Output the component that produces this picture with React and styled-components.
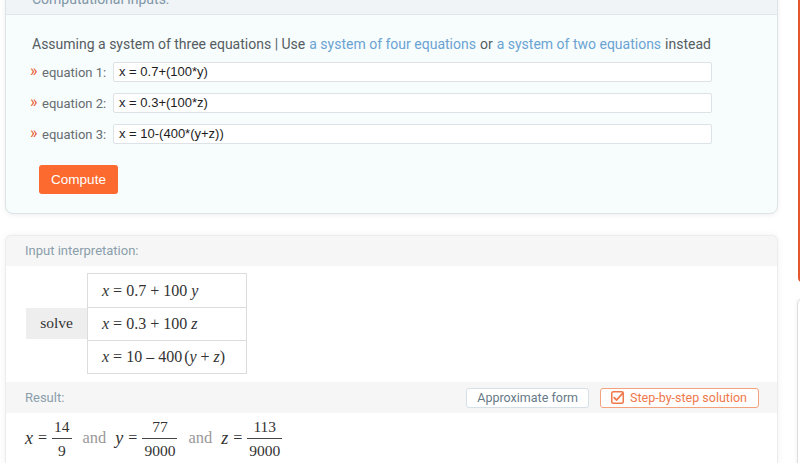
import React from "react";
import styled, { createGlobalStyle } from "styled-components";

const Global = createGlobalStyle`
  html, body { margin: 0; padding: 0; background: #ffffff; overflow: hidden; }
  body { font-family: Roboto, "Noto Sans", sans-serif; }
  * { box-sizing: border-box; }
`;

const Page = styled.div`
  display: flex;
  align-items: flex-start;
  padding-left: 5px;
  height: 463px;
  overflow: hidden;
`;

const Main = styled.main`
  display: flex;
  flex-direction: column;
  gap: 21px;
  width: 773px;
  flex-shrink: 0;
  margin-top: -17px;
`;

const Aside = styled.aside`
  display: flex;
  flex-direction: column;
  gap: 16px;
  width: 300px;
  flex-shrink: 0;
  margin-left: 20px;
`;

const AsideTop = styled.div`
  height: 282px;
  border-left: 2px solid #e4572e;
  border-bottom: 2px solid #e4572e;
  border-bottom-left-radius: 4px;
  background: #fff;
`;

const AsideBottom = styled.div`
  height: 200px;
  margin-left: -1px;
  border: 1px solid #dedede;
  border-radius: 6px 0 0 0;
  background: #fff;
  box-shadow: 0 0 5px rgba(0, 0, 0, 0.06);
`;

const InputCard = styled.section`
  border: 1px solid #dde4e8;
  border-radius: 0 0 8px 8px;
  background: #f7fcfd;
  box-shadow: 0 1px 5px rgba(0, 0, 0, 0.07);
  overflow: hidden;
`;

const CardHeader = styled.div`
  height: 31px;
  line-height: 30px;
  padding-left: 26px;
  background: #f1f4f6;
  border-bottom: 1px solid #e0e6ea;
  font-size: 14px;
  color: #7f96a7;
`;

const CardBody = styled.div`
  padding: 20px 65px 19px 25px;
`;

const Assume = styled.p`
  margin: 0;
  padding-left: 1px;
  font-size: 14px;
  line-height: 18px;
  color: #555d62;
  white-space: nowrap;
`;

const Link = styled.a`
  color: #6aa3d3;
  text-decoration: none;
  margin: 0 4px;
`;

const Rows = styled.div`
  display: flex;
  flex-direction: column;
  gap: 11px;
  margin-top: 9px;
`;

const Row = styled.div`
  display: flex;
  align-items: center;
  height: 20px;
`;

const Chevron = styled.span`
  color: #e8552b;
  font-size: 16px;
  width: 12px;
  line-height: 1;
  margin: -2px 0 0 -1px;
`;

const Label = styled.span`
  font-size: 13px;
  color: #666c70;
  width: 71px;
  flex-shrink: 0;
`;

const Field = styled.div`
  flex: 1;
  height: 20px;
  line-height: 18px;
  padding-left: 5px;
  border: 1px solid #dce2e5;
  border-radius: 2px;
  background: #fff;
  font-family: "Liberation Sans", Arial, sans-serif;
  font-size: 13px;
  color: #1d1d1d;
`;

const ComputeButton = styled.button`
  margin: 21px 0 0 8px;
  width: 79px;
  height: 29px;
  border: none;
  border-radius: 3px;
  background: #fd6a2f;
  color: #fff;
  font-family: "Liberation Sans", Arial, sans-serif;
  font-size: 13.5px;
  display: block;
`;

const PodCard = styled.section`
  border: 1px solid #ececec;
  border-radius: 6px 6px 0 0;
  background: #f6f6f6;
  box-shadow: 0 0 6px rgba(0, 0, 0, 0.06);
`;

const PodHeader = styled.div`
  height: 30px;
  line-height: 29px;
  padding-left: 19px;
  font-size: 13px;
  color: #8a9eab;
`;

const PodContent = styled.div`
  background: #fff;
  padding: ${(p) => p.$pad};
`;

const Table = styled.div`
  display: flex;
  align-items: center;
`;

const SolveCell = styled.div`
  width: 61px;
  height: 31px;
  line-height: 30px;
  text-align: center;
  background: #eeeeee;
  font-family: "Liberation Serif", "Times New Roman", serif;
  font-size: 15.5px;
  color: #333;
`;

const EqColumn = styled.div`
  display: flex;
  flex-direction: column;
  width: 160px;
  border: 1px solid #dcdcdc;
`;

const EqCell = styled.div`
  height: 33px;
  display: flex;
  align-items: center;
  padding-left: 14px;
  border-top: ${(p) => (p.$first ? "none" : "1px solid #dcdcdc")};
  font-family: "Liberation Serif", "Times New Roman", serif;
  font-size: 16px;
  color: #333;
  white-space: nowrap;
`;

const V = styled.i`
  font-style: italic;
  font-size: ${(p) => p.$size || "inherit"};
`;

const Op = styled.span`
  margin: 0 ${(p) => p.$gap ?? 4}px;
`;

const ResultBar = styled.div`
  height: 31px;
  display: flex;
  align-items: center;
  justify-content: space-between;
  padding: 0 18px 0 19px;
`;

const ResultLabel = styled.span`
  font-size: 13px;
  color: #8a9eab;
`;

const Buttons = styled.div`
  display: flex;
  gap: 11px;
`;

const PodButton = styled.button`
  height: 20px;
  display: flex;
  align-items: center;
  gap: 6px;
  padding: 0 ${(p) => (p.$accent ? "11px 0 10px" : "10px")};
  border: 1px solid ${(p) => (p.$accent ? "#f3a27d" : "#d5e0e7")};
  border-radius: 3px;
  background: #fff;
  color: ${(p) => (p.$accent ? "#f0784a" : "#667a87")};
  font-family: Roboto, sans-serif;
  font-size: 12.5px;
`;

const MathLine = styled.div`
  display: flex;
  align-items: center;
  height: 50px;
  padding-left: 19px;
  font-family: "Liberation Serif", "Times New Roman", serif;
  font-size: 16px;
  color: #333;
  white-space: nowrap;
`;

const Frac = styled.span`
  display: inline-flex;
  flex-direction: column;
  align-items: center;
  font-size: 15.5px;
  line-height: 14px;
  margin-top: 2px;
`;

const Num = styled.span`
  padding: 0 2px 4px;
`;

const Den = styled.span`
  padding: 5px 2px 0;
  border-top: 1px solid #444;
  align-self: stretch;
  text-align: center;
`;

const And = styled.span`
  color: #999;
  font-size: 16.5px;
  margin: 0 9px 0 11px;
`;

const CheckIcon = () => (
  <svg width="13" height="13" viewBox="0 0 13 13" fill="none">
    <rect x="0.75" y="0.75" width="11.5" height="11.5" rx="1.5" stroke="#f0784a" strokeWidth="1.5" />
    <path d="M3.2 6.6 L5.6 9 L11.8 2.2" stroke="#f0784a" strokeWidth="1.8" strokeLinecap="round" strokeLinejoin="round" />
  </svg>
);

const equations = [
  { label: "equation 1:", value: "x = 0.7+(100*y)" },
  { label: "equation 2:", value: "x = 0.3+(100*z)" },
  { label: "equation 3:", value: "x = 10-(400*(y+z))" },
];

export default function App() {
  return (
    <>
      <Global />
      <Page>
        <Main>
          <InputCard>
            <CardHeader>Computational inputs:</CardHeader>
            <CardBody>
              <Assume>
                Assuming a system of three equations | Use
                <Link>a system of four equations</Link>or
                <Link>a system of two equations</Link>instead
              </Assume>
              <Rows>
                {equations.map((e) => (
                  <Row key={e.label}>
                    <Chevron>»</Chevron>
                    <Label>{e.label}</Label>
                    <Field>{e.value}</Field>
                  </Row>
                ))}
              </Rows>
              <ComputeButton>Compute</ComputeButton>
            </CardBody>
          </InputCard>

          <PodCard>
            <PodHeader>Input interpretation:</PodHeader>
            <PodContent $pad="7px 20px 8px 20px">
              <Table>
                <SolveCell>solve</SolveCell>
                <EqColumn>
                  <EqCell $first>
                    <V>x</V><Op>=</Op>0.7<Op>+</Op>100<Op $gap={2} />
                    <V>y</V>
                  </EqCell>
                  <EqCell>
                    <V>x</V><Op>=</Op>0.3<Op>+</Op>100<Op $gap={2} />
                    <V>z</V>
                  </EqCell>
                  <EqCell>
                    <V>x</V><Op>=</Op>10<Op>–</Op>400<Op $gap={1} />(<V>y</V><Op>+</Op><V>z</V>)
                  </EqCell>
                </EqColumn>
              </Table>
            </PodContent>
            <ResultBar>
              <ResultLabel>Result:</ResultLabel>
              <Buttons>
                <PodButton>Approximate form</PodButton>
                <PodButton $accent>
                  <CheckIcon />
                  Step-by-step solution
                </PodButton>
              </Buttons>
            </ResultBar>
            <PodContent $pad="0">
              <MathLine>
                <V $size="18px">x</V><Op $gap={5}>=</Op>
                <Frac><Num>14</Num><Den>9</Den></Frac>
                <And>and</And>
                <V $size="18px">y</V><Op $gap={5}>=</Op>
                <Frac><Num>77</Num><Den>9000</Den></Frac>
                <And>and</And>
                <V $size="18px">z</V><Op $gap={5}>=</Op>
                <Frac><Num>113</Num><Den>9000</Den></Frac>
              </MathLine>
            </PodContent>
          </PodCard>
        </Main>
        <Aside>
          <AsideTop />
          <AsideBottom />
        </Aside>
      </Page>
    </>
  );
}
